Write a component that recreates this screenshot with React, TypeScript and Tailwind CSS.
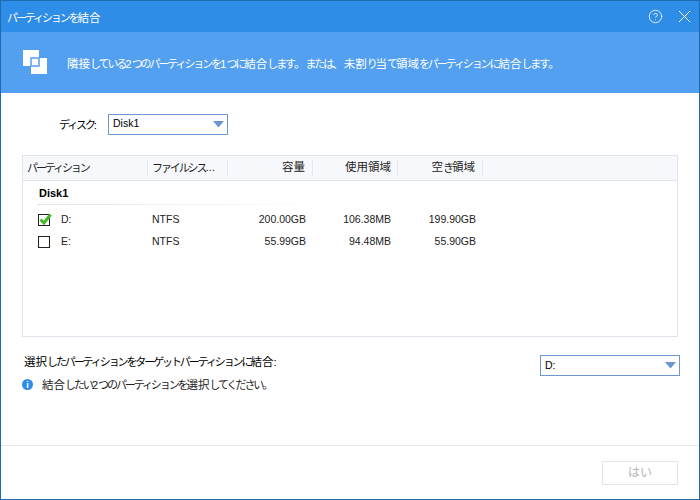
import { HelpCircle } from 'lucide-react'

const font = { fontFamily: '"Liberation Sans", "Noto Sans CJK JP", sans-serif' }

const rows = [
  { name: 'D:', fs: 'NTFS', size: '200.00GB', used: '106.38MB', free: '199.90GB', checked: true },
  { name: 'E:', fs: 'NTFS', size: '55.99GB', used: '94.48MB', free: '55.90GB', checked: false },
]

// the original UI font sets kana much narrower than kanji
function Ja({ text }: { text: string }) {
  const parts = text.match(/[\u3040-\u30ff]+|[^\u3040-\u30ff]+/g) ?? []
  return (
    <>
      {parts.map((part, i) =>
        /[\u3040-\u30ff]/.test(part) ? (
          <span key={i} className="text-[11px] tracking-[-2.1px]">{part}</span>
        ) : (
          <span key={i} className="text-[11.5px]">{part}</span>
        ),
      )}
    </>
  )
}

function Caret() {
  return (
    <svg width="11" height="7" viewBox="0 0 11 7" className="shrink-0">
      <path d="M0 0H11L5.5 6.5Z" fill="#6a96d4" />
    </svg>
  )
}

function Select({ value, className }: { value: string; className: string }) {
  return (
    <div className={`flex h-[21px] items-center justify-between border border-[#6b97d2] pl-[4px] pr-[3px] text-[10.5px] text-black ${className}`}>
      <span>{value}</span>
      <Caret />
    </div>
  )
}

function Checkbox({ checked }: { checked: boolean }) {
  return (
    <div className="relative h-[12px] w-[12px] border border-[#222] bg-white">
      {checked && (
        <svg width="15" height="14" viewBox="0 0 15 14" className="absolute left-[-1px] top-[-3px]">
          <path d="M2.5 7.5L6 11L12.5 2.5" fill="none" stroke="#46b82a" strokeWidth="3" />
        </svg>
      )}
    </div>
  )
}

function HeaderCell({ label, className }: { label: string; className: string }) {
  return (
    <div className={`flex h-[16px] items-center whitespace-nowrap border-r border-[#e3e8f0] ${className}`}>
      <Ja text={label} />
    </div>
  )
}

export default function App() {
  return (
    <div style={font} className="flex h-[500px] w-[700px] flex-col overflow-hidden border border-[#1f6bb0] bg-white text-[#222]">
      <div className="flex h-[31px] shrink-0 items-center justify-between bg-[#2e8de6] pl-[6px] pr-[9px] text-white">
        <span className="whitespace-nowrap"><Ja text="パーティションを結合" /></span>
        <div className="flex items-center gap-[16px]">
          <HelpCircle size={15} strokeWidth={1.3} />
          <svg width="11" height="11" viewBox="0 0 11 11">
            <path d="M0 0L11 11M11 0L0 11" stroke="#fff" strokeWidth="1" />
          </svg>
        </div>
      </div>

      <div className="flex h-[61px] shrink-0 items-center bg-[#53a0f1] pl-[22px] text-white">
        <svg width="25" height="25" viewBox="0 0 25 25" className="shrink-0">
          <rect x="0" y="0" width="16" height="16" fill="#fff" />
          <rect x="8" y="8" width="16" height="16" fill="#fff" />
          <rect x="8" y="8" width="8" height="8" fill="none" stroke="#53a0f1" strokeWidth="1.5" />
        </svg>
        <span className="ml-[19px] whitespace-nowrap">
          <Ja text="隣接している2つのパーティションを1つに結合します。または、未割り当て領域をパーティションに結合します。" />
        </span>
      </div>

      <div className="flex flex-1 flex-col">
        <div className="flex h-[62px] shrink-0 items-center pl-[58px] text-black">
          <span className="w-[49px] whitespace-nowrap"><Ja text="ディスク:" /></span>
          <Select value="Disk1" className="w-[120px]" />
        </div>

        <div className="mx-[21px] flex h-[182px] shrink-0 flex-col border border-[#dfe4ee] text-[10.5px]">
          <div className="flex h-[25px] shrink-0 items-center border-b border-[#dfe4ee] bg-[#f6f8fc]">
            <HeaderCell label="パーティション" className="w-[125px] pl-[4px]" />
            <HeaderCell label="ファイルシス..." className="w-[80px] pl-[4px]" />
            <HeaderCell label="容量" className="w-[85px] justify-end pr-[7px]" />
            <HeaderCell label="使用領域" className="w-[85px] justify-end pr-[6px]" />
            <HeaderCell label="空き領域" className="w-[85px] justify-end pr-[7px]" />
          </div>

          <div className="ml-[16px] mt-[4px] h-[16px] text-[11px] font-bold leading-[16px] text-black">Disk1</div>
          <div className="ml-[14px] mt-[3px] h-px w-[296px] bg-gradient-to-r from-[#dfe4ee] to-transparent" />

          <div className="mt-[4px]">
            {rows.map(row => (
              <div key={row.name} className="flex h-[22px] items-center">
                <div className="flex w-[124px] items-center pl-[15px]">
                  <Checkbox checked={row.checked} />
                  <span className="ml-[11px]">{row.name}</span>
                </div>
                <div className="w-[80px] pl-[5px]">{row.fs}</div>
                <div className="w-[85px] pr-[6px] text-right">{row.size}</div>
                <div className="w-[85px] pr-[6px] text-right">{row.used}</div>
                <div className="w-[85px] pr-[6px] text-right">{row.free}</div>
              </div>
            ))}
          </div>
        </div>

        <div className="ml-[23px] mr-[19px] mt-[16px] flex items-start justify-between">
          <div>
            <div className="leading-[16px] text-black">
              <Ja text="選択したパーティションをターゲットパーティションに結合:" />
            </div>
            <div className="-ml-[2px] mt-[6px] flex items-center leading-[16px]">
              <span className="flex h-[11px] w-[11px] items-center justify-center rounded-full bg-[#2e8de6] text-[9px] font-bold text-white">i</span>
              <span className="ml-[9px]"><Ja text="結合したい2つのパーティションを選択してください。" /></span>
            </div>
          </div>
          <Select value="D:" className="mt-[2px] w-[140px]" />
        </div>

        <div className="mt-auto flex h-[54px] shrink-0 items-center justify-end border-t border-[#e4e7ec] pr-[21px]">
          <button className="h-[24px] w-[76px] border border-[#dfe3ea] bg-white text-[12px] text-[#b5b5b5]">はい</button>
        </div>
      </div>
    </div>
  )
}
